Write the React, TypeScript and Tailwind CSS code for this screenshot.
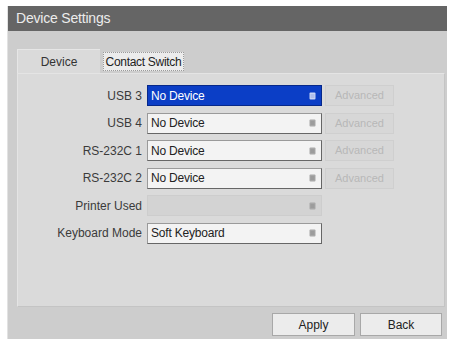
import React from "react";

const font = { fontFamily: '"Liberation Sans", Arial, sans-serif' };

function Arrow({ active }: { active?: boolean }) {
  const c = active ? "#c8d4f4" : "#a8a8a8";
  return (
    <svg width="7" height="8" viewBox="0 0 7 8">
      <rect x="0.5" y="0.5" width="6" height="7" rx="1" fill={c} />
      <line x1="1.5" y1="3" x2="5.5" y2="3" stroke={active ? "#8aa0e0" : "#8a8a8a"} strokeWidth="0.8" />
      <line x1="1.5" y1="5" x2="5.5" y2="5" stroke={active ? "#8aa0e0" : "#8a8a8a"} strokeWidth="0.8" />
    </svg>
  );
}

type Row = { label: string; value: string; active?: boolean; disabled?: boolean; adv?: boolean };

const rows: Row[] = [
  { label: "USB 3", value: "No Device", active: true, adv: true },
  { label: "USB 4", value: "No Device", adv: true },
  { label: "RS-232C 1", value: "No Device", adv: true },
  { label: "RS-232C 2", value: "No Device", adv: true },
  { label: "Printer Used", value: "", disabled: true },
  { label: "Keyboard Mode", value: "Soft Keyboard" },
];

export default function App() {
  return (
    <div className="w-[451px] h-[339px] bg-white pt-[6px] pl-[7px] pr-[4px] overflow-hidden" style={font}>
      <div className="h-[333px] flex flex-col bg-[#cdcdcd] border-l border-[#e2e2e2]">
        <div className="h-[25px] bg-[#656565] flex items-center pl-[8px] text-[14px] text-[#ececec] tracking-[-0.2px]">
          Device Settings
        </div>
        <div className="flex-1 flex flex-col pl-[9px] pr-[2px]">
          <div className="h-[42px] flex items-end">
            <div className="w-[83px] h-[24px] bg-[#dadada] border-t border-l border-[#e6e6e6] flex items-center justify-center text-[12px] text-[#333]">
              Device
            </div>
            <div className="ml-[3px] mb-[2px] w-[81px] h-[19px] bg-[#ececec] border border-dotted border-[#9a9a9a] flex items-center justify-center text-[12px] text-[#222] tracking-[-0.3px]">
              Contact Switch
            </div>
          </div>
          <div className="h-[234px] bg-[#dadada] border-t border-l border-r border-b border-[#e4e4e4] border-b-[#c4c4c4] border-r-[#c4c4c4] pt-[11px] flex flex-col gap-[6.6px]">
            {rows.map((r) => (
              <div key={r.label} className="flex items-center h-[21px]">
                <div className="w-[125px] text-right text-[12px] text-[#3a3a3a] pr-[1px]">{r.label}</div>
                <div
                  className={
                    "ml-[4px] w-[175px] h-[21px] flex items-center justify-between pl-[3px] pr-[5px] text-[12px] tracking-[-0.2px] " +
                    (r.active
                      ? "bg-[#0b3ec6] text-white border border-[#06288a]"
                      : r.disabled
                      ? "bg-[#d3d3d3] border border-[#cdcdcd]"
                      : "bg-[#f3f3f3] text-[#222] border border-[#9a9a9a] border-r-[#666] border-b-[#666]")
                  }
                >
                  <span>{r.value}</span>
                  <Arrow active={r.active} />
                </div>
                {r.adv && (
                  <div className="ml-[3px] w-[69px] h-[21px] bg-[#d7d7d7] border border-[#cfcfcf] flex items-center justify-center text-[11px] text-[#b8b8b8]">
                    Advanced
                  </div>
                )}
              </div>
            ))}
          </div>
          <div className="flex-1 flex justify-end items-start pt-[6px] pr-[3px] gap-[5px]">
            <div className="w-[83px] h-[23px] bg-[#ececec] border border-[#a8a8a8] flex items-center justify-center text-[12px] text-[#222]">
              Apply
            </div>
            <div className="w-[82px] h-[23px] bg-[#ececec] border border-[#a8a8a8] flex items-center justify-center text-[12px] text-[#222]">
              Back
            </div>
          </div>
        </div>
      </div>
    </div>
  );
}
